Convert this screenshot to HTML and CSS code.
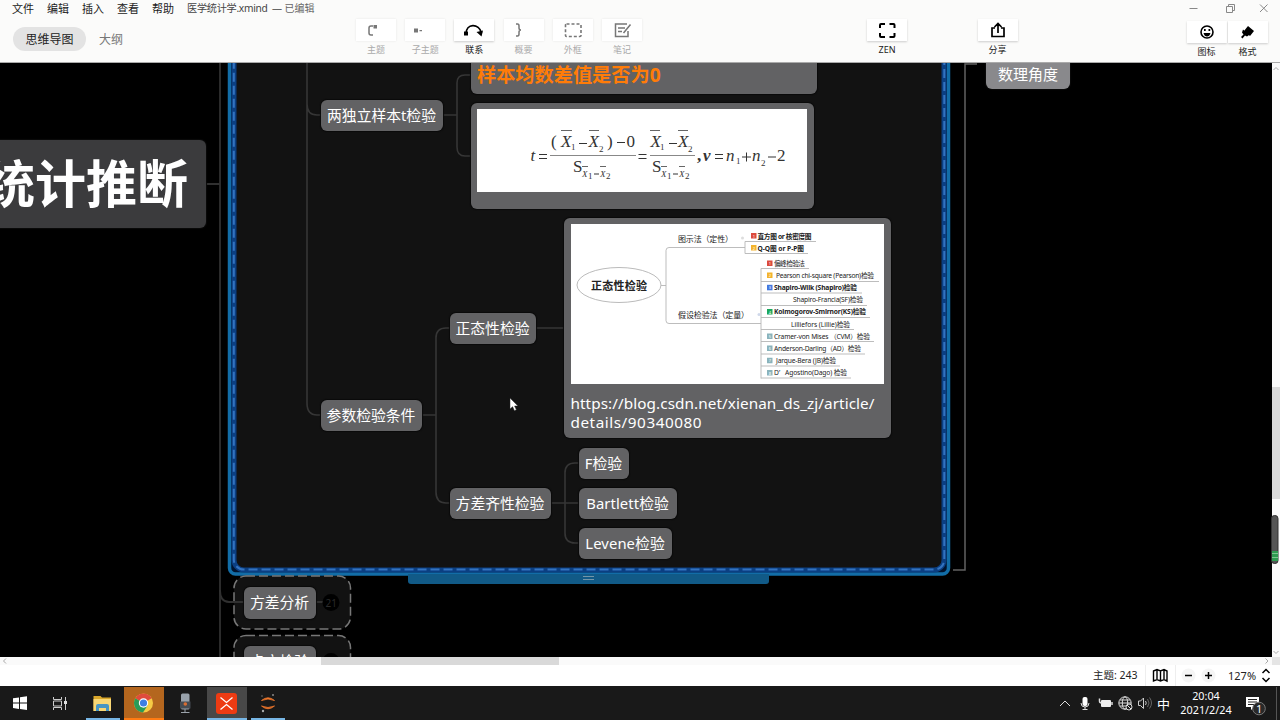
FILE: index.html
```html
<!DOCTYPE html>
<html lang="zh-CN">
<head>
<meta charset="utf-8">
<title>医学统计学.xmind</title>
<link rel="stylesheet" href="styles.css">
</head>
<body>
<div class="app">
  <header class="header">
    <div class="left">
      <nav class="menu"><span>文件</span><span>编辑</span><span>插入</span><span>查看</span><span>帮助</span><span class="doc">医学统计学.xmind</span><span class="edited">— 已编辑</span></nav>
      <div class="views"><b>思维导图</b><span>大纲</span></div>
    </div>
    <div class="tools">
      <div class="tool off"><i><svg width="40" height="22"><path d="M17 7h-2q-2 0-2 2v5q0 2 2 2h2" fill="none" stroke="#777" stroke-width="1.5"/><rect x="17.500" y="6" width="3.500" height="3.500" fill="#777"/></svg></i><span>主题</span></div>
      <div class="tool off"><i><svg width="40" height="22"><path d="M9 9.500h4v4H9zM14.500 11h2.500v1.300h-2.500z" fill="#777"/></svg></i><span>子主题</span></div>
      <div class="tool"><i><svg width="40" height="22"><path d="M12 15C12 4 25 4 27.500 14" fill="none" stroke="#000" stroke-width="1.800"/><path d="M10 12.500h4v4h-4zM22.500 13l6.500-1.500-1.500 6z"/></svg></i><span>联系</span></div>
      <div class="tool off"><i><svg width="40" height="22"><path d="M12 5h1.500q1.500 0 1.500 2v2q0 2 2 2-2 0-2 2v2q0 2-1.500 2H12" fill="none" stroke="#777" stroke-width="1.500"/></svg></i><span>概要</span></div>
      <div class="tool off"><i><svg width="40" height="22"><rect x="12.500" y="5" width="15.500" height="12.500" rx="1" fill="none" stroke="#777" stroke-width="1.600" stroke-dasharray="3 2"/></svg></i><span>外框</span></div>
      <div class="tool off"><i><svg width="40" height="22"><path d="M25 5H13.500v12.500h12.500V12M16 9h7M16 12.500h4M21.500 14l7-8.500" fill="none" stroke="#777" stroke-width="1.500"/></svg></i><span>笔记</span></div>
    </div>
    <div class="tool zen"><i><svg width="40" height="22"><path d="M18 5h-4q-1 0-1 1v3M22.500 5h4q1 0 1 1v3M13 14v3q0 1 1 1h4M27.500 14v3q0 1-1 1h-4" fill="none" stroke="#000" stroke-width="2"/></svg></i><span>ZEN</span></div>
    <div class="tool share"><i><svg width="40" height="22"><path d="M17 9h-3v8.500h12V9h-3M20 14V5M16.500 8L20 4.500 23.500 8" fill="none" stroke="#000" stroke-width="1.700"/></svg></i><span>分享</span></div>
    <div class="right">
      <svg class="win" width="90" height="16"><path d="M4.500 7.500h8M75 3.500l7.500 7.500M82.500 3.500L75 11M41.500 5.500h6v6h-6zM43.500 5.500v-2h6v6h-2" fill="none" stroke="#888" stroke-width="1"/></svg>
      <div class="pair">
        <div class="tool"><i><svg width="40" height="22"><circle cx="20" cy="11" r="6" fill="none" stroke="#000" stroke-width="1.600"/><path d="M17 8h1.700v2H17zM21.500 8h1.700v2h-1.700zM16.500 12h7q-1 3.500-3.500 3.500T16.500 12z"/></svg></i><span>图标</span></div>
        <div class="tool"><i><svg width="40" height="22"><path d="M20 5l6 5-4 5-6-5zM15 8.500l6 5.500-2 1.500-2-1-2.500 3-1.500-1.500 2.500-2.500-1.500-2z"/></svg></i><span>格式</span></div>
      </div>
    </div>
  </header>

  <main class="workspace">
    <div class="canvas">
      <svg class="lines" width="1272" height="594" viewBox="0 63 1272 594">
        <path d="M220 63V657M206 184H220" class="trunk"/>
        <rect x="229.500" y="20" width="719" height="554" rx="6" fill="#001430" stroke="#126da7" stroke-width="3.500"/>
        <rect x="234" y="24" width="710" height="546" rx="10" fill="#121212" stroke="#0b3f82" stroke-width="5"/>
        <rect x="233.800" y="24" width="710.500" height="545.500" rx="10" fill="none" stroke="#3373c0" stroke-width="2" stroke-dasharray="9 4"/>
        <path d="M408 574h361v7q0 3-3 3H411q-3 0-3-3z" fill="#115a87"/>
        <path d="M583 576.500h11M583 579.500h11" stroke="#7295a8" fill="none"/>
        <g class="wire">
          <path d="M307 63V403q0 12 10 12h4M307 104q0 11 10 11h4M443 115h14M471 75h-6q-8 0-8 8v64q0 9 8 9h6"/>
          <path d="M422 415h14M450 328h-4q-10 0-10 10v154q0 11 10 11h4M536 328h29M551 503h28M579 463h-4q-10 0-10 10v60q0 10 10 10h4"/>
        </g>
        <path d="M953 570h12V64h12" fill="none" stroke="#626262" stroke-width="1.500"/>
        <g fill="#121212" stroke="#777" stroke-width="1.500" stroke-dasharray="9 4">
          <rect x="234" y="576" width="116.500" height="53" rx="12"/>
          <rect x="234" y="635.500" width="116.500" height="53" rx="12"/>
        </g>
        <path d="M220 590q0 12 9 12h15M316 602h8" class="trunk"/>
        <circle cx="331" cy="602.500" r="8.500" fill="#000"/><text x="325.500" y="606.500" font-size="10" fill="#2b2b2b">21</text>
        <circle cx="331" cy="661.500" r="8.500" fill="#000"/>
      </svg>
      <div class="map">
        <div class="node root" style="left:-40px;top:140px;width:246px;height:88px">统计推断</div>
        <div class="node" style="left:321px;top:100px;width:122px;height:31px">两独立样本t检验</div>
        <div class="node" style="left:321px;top:400px;width:101px;height:31px">参数检验条件</div>
        <div class="node" style="left:450px;top:313px;width:86px;height:31px">正态性检验</div>
        <div class="node" style="left:450px;top:488px;width:101px;height:31px">方差齐性检验</div>
        <div class="node" style="left:579px;top:448px;width:50px;height:31px">F检验</div>
        <div class="node" style="left:579px;top:488px;width:98px;height:31px"><em>Bartlett</em>检验</div>
        <div class="node" style="left:579px;top:528px;width:93px;height:31px"><em>Levene</em>检验</div>
        <div class="node" style="left:244px;top:587px;width:72px;height:32px">方差分析</div>
        <div class="node" style="left:244px;top:646px;width:72px;height:32px">卡方检验</div>
        <div class="node angle" style="left:986px;top:50px;width:84px;height:39px">数理角度</div>
        <div class="node orange" style="left:471px;top:40px;width:346px;height:54px"><span>样本均数差值是否为0</span></div>
        <div class="node card" style="left:471px;top:103px;width:343px;height:106px">
          <svg width="330" height="83" viewBox="477 109 330 83" class="formula">
            <rect x="477" y="109" width="330" height="83" fill="#fff"/>
            <g class="it">
              <text x="530.500" y="161">t</text><text x="561" y="147" textLength="10">X</text><text x="588.500" y="147" textLength="10">X</text><text x="650.500" y="147" textLength="10">X</text><text x="678" y="147" textLength="10">X</text>
              <text x="703" y="161" font-weight="bold">ν</text><text x="726" y="161">n</text><text x="752" y="161">n</text>
            </g>
            <g>
              <text x="551" y="147">(</text><text x="607" y="147">)</text><text x="626.500" y="147">0</text><text x="573" y="172">S</text><text x="652" y="172">S</text><text x="697" y="161" font-weight="bold">,</text><text x="777" y="161">2</text>
            </g>
            <g class="sub"><text x="571" y="150">1</text><text x="599" y="152">2</text><text x="660" y="150">1</text><text x="688" y="152">2</text><text x="736" y="164">1</text><text x="761" y="166">2</text><text x="588" y="178.500">1</text><text x="606" y="178.500">2</text><text x="667" y="178.500">1</text><text x="685" y="178.500">2</text><g font-style="italic"><text x="582" y="176.500">X</text><text x="600" y="176.500">X</text><text x="661" y="176.500">X</text><text x="679" y="176.500">X</text></g></g>
            <path d="M539 154.500h8M539 158.500h8M638.500 154.500h8M638.500 158.500h8M715 154.500h8M715 158.500h8M579 143.500h8M617 142.500h8M669 143.500h8M742 157h9M746.500 152.500v9M768 157h8M594 174h5M673 174h5" stroke="#333" fill="none"/>
            <path d="M561 130.500h11M589 130.500h10M650 130.500h10M678 130.500h10M582 166.500h6M600 166.500h6M661 166.500h6M679 166.500h6" stroke="#666" fill="none"/>
            <path d="M550 155.500h86M650 155.500h45" stroke="#888" fill="none"/>
          </svg>
        </div>
        <div class="node card" style="left:564px;top:218px;width:327px;height:220px">
          <svg width="313" height="160" viewBox="571 223 313 160" class="chart">
            <rect x="571" y="223" width="313" height="160" fill="#fff"/>
            <path d="M661 284.500h5M745 246.500h-76q-3 0-3 3v70q0 3 3 3h92M745 240.500v12M745 240.500h71M745 252.500h63M761 267.500v110M761 267.500h48M761 280.500h118M761 292h101M761 304.500h106M761 316.500h109M761 328.500h93M761 340.500h113M761 353h104M761 365h79M761 377h90" fill="none" stroke="#b5b5b5" stroke-width=".9"/>
            <ellipse cx="619" cy="284" rx="42" ry="17.500" fill="#fff" stroke="#bbb"/>
            <text x="591" y="288.500" class="topic" textLength="56">正态性检验</text>
            <text x="678" y="240.500" class="method" textLength="55">图示法（定性）</text><text x="678" y="317" class="method" textLength="71">假设检验法（定量）</text>
            <circle cx="742.500" cy="237" r="1.500" fill="#ddd"/><circle cx="759" cy="313.500" r="1.500" fill="#cfd8ea"/>
            <g font-weight="bold"><text x="757.500" y="237.500" textLength="54">直方图 or 核密度图</text><text x="757.500" y="249.500" textLength="46.500">Q-Q图 or P-P图</text><text x="774" y="289" textLength="83">Shapiro-Wilk (Shapiro)检验</text><text x="774" y="313.300" textLength="92">Kolmogorov-Smirnor(KS)检验</text></g>
            <g><text x="774" y="265" textLength="31">偏峰检验法</text><text x="776" y="277" textLength="98">Pearson chi-square (Pearson)检验</text><text x="793" y="301" textLength="70">Shapiro-Francia(SF)检验</text><text x="791" y="325.500" textLength="59">Lilliefors (Lillie)检验</text><text x="774" y="337.500" textLength="96">Cramer-von Mises （CVM）检验</text><text x="774" y="349.800" textLength="87">Anderson-Darling（AD）检验</text><text x="776" y="362" textLength="60">Jarque-Bera (JB)检验</text><text x="774" y="374.300">D’</text><text x="785" y="374.300" textLength="62">Agostino(Dago) 检验</text></g>
            <path d="M751 232h5.500v5.500H751zM767 259.500h5.500v5.500H767z" fill="#dc4a3d"/><path d="M751 244h5.500v5.500H751zM767 271.500h5.500v5.500H767z" fill="#f3b32c"/><path d="M767 283.800h5.500v5.500H767z" fill="#4378df"/><path d="M767 308h5.500v5.500H767z" fill="#1aa85d"/><path d="M767 332.500h5.500v5.500H767zM767 344.500h5.500v5.500H767zM767 356.800h5.500v5.500H767zM767 369h5.500v5.500H767z" fill="#8ab3bb"/>
            <g class="tiny"><text x="752.700" y="236.500">1</text><text x="752.700" y="248.500">2</text><text x="768.700" y="264">1</text><text x="768.700" y="276">2</text><text x="768.700" y="288.300">3</text><text x="768.700" y="312.500">4</text><text x="768.700" y="337">5</text><text x="768.700" y="349">6</text><text x="768.700" y="361.300">7</text><text x="768.700" y="373.500">8</text></g>
          </svg>
          <svg width="313" height="48" viewBox="571 386 313 48" class="url"><text x="570.500" y="409" textLength="304">https://blog.csdn.net/xienan_ds_zj/article/</text><text x="570.500" y="428" textLength="131">details/90340080</text></svg>
        </div>
        <svg class="cursor" width="10" height="16"><path d="M1 1v11l2.600-2.300 1.800 4 2-1-1.800-3.700H9z" fill="#fff" stroke="#222" stroke-width=".5"/></svg>
      </div>
    </div>
    <aside class="vbar">
      <svg width="8" height="594"><path d="M1.500 7L4 4.500 6.500 7M1.500 588L4 590.500 6.500 588" fill="none" stroke="#aaa"/><rect y="324" width="8" height="112" fill="#d9d9d9"/></svg>
      <svg class="level" width="8" height="50"><rect x=".5" y=".5" width="6.500" height="48" rx="3" fill="#555" stroke="#333"/><path d="M1 36h6v10H1z" fill="#2e9a50"/><path d="M1 38.500h6M1 42.500h6" stroke="#8fd39f" stroke-width=".8"/></svg>
    </aside>
  </main>
  <div class="hbar"><svg width="1280" height="8"><path d="M6 1.500L3.500 4 6 6.500M1265.500 1.500L1268 4l-2.500 2.500" fill="none" stroke="#aaa"/><rect x="321" width="238" height="8" fill="#d9d9d9"/><rect x="1272" width="8" height="8" fill="#e5e5e5"/></svg></div>
  <footer class="status">
    <span class="count">主题: 243</span>
    <svg width="36" height="21" class="book"><path d="M.500 0v21M30.500 0v21" stroke="#eee"/><path d="M8.500 6L12 4.500 15.500 6 19 4.500 22 6v10L19 14.500l-3.500 1.500-3.500-1.500L8.500 16zM12 4.500v10M15.500 6v10M19 4.500v10" fill="none" stroke="#000" stroke-width="1.400"/></svg>
    <svg width="44" height="21" class="pm"><circle cx="7.500" cy="10.500" r="7" fill="#f5f5f5"/><circle cx="27.500" cy="10.500" r="7" fill="#f5f5f5"/><path d="M4 10.500h7M24 10.500h7M27.500 7v7" stroke="#000" stroke-width="1.500"/></svg>
    <span class="pct">127%</span>
    <svg width="10" height="21"><path d="M1.500 8L5 4.500 8.500 8M1.500 13L5 16.500 8.500 13" fill="none" stroke="#000" stroke-width="1.500"/></svg>
  </footer>
  <footer class="taskbar">
    <svg width="300" height="34" viewBox="0 686 300 34">
      <path d="M13 698.300l6-.9v5.200h-6zM20 697.200l7-1v6.400h-7zM13 703.600h6v5.400l-6-.9zM20 703.600h7v6.500l-7-1z" fill="#fff"/>
      <path d="M53.500 697v2.500h8V697M53.500 710v-2.500h8v2.500M53.500 701h8v5h-8zM65.500 697v13" fill="none" stroke="#ccc"/><rect x="64" y="701" width="3" height="3" fill="#ddd"/>
      <path d="M93.500 696h7l1.500 1.500h9V711H93.500z" fill="#d9a72b"/><path d="M93.500 699H111v12H93.500z" fill="#f8d775"/><path d="M96 711v-5q0-2 2-2h9q2 0 2 2v5h-3v-3h-7v3z" fill="#4796c4"/>
      <path d="M86 718h34v2H86zM207 718h40v2h-40zM251 718h34v2h-34z" fill="#77b6e5"/>
      <rect x="124" y="687" width="40" height="33" fill="#b4661e"/><rect x="124" y="718" width="40" height="2" fill="#ff7b12"/>
      <circle cx="143.500" cy="703" r="9.500" fill="#f6cb45"/><path d="M143.500 703L135.300 698.200A9.500 9.500 0 0 1 151.700 698.200z" fill="#df4b3d"/><path d="M143.500 703L135.300 698.200A9.500 9.500 0 0 0 143 712.500l4.500-7z" fill="#299b58"/><circle cx="143.500" cy="703" r="4.700" fill="#fff"/><circle cx="143.500" cy="703" r="3.600" fill="#3e7fe5"/>
      <rect x="181" y="693.500" width="8.500" height="16" rx="1.500" fill="#98a1aa"/><path d="M180 701.500h10.500v7H180z" fill="#444b52"/><circle cx="185.300" cy="704" r="1.800" fill="#d96d31"/><path d="M185 709v3.500M181 712.500h8.500" stroke="#9ba3ab"/>
      <rect x="207" y="687" width="40" height="31" fill="#484848"/><rect x="216" y="693" width="21" height="21" rx="3" fill="#ed3b13"/><path d="M220.500 697.500l6 5 6-5M220.500 709.500l6-5 6 5" fill="none" stroke="#fff" stroke-width="1.300"/>
      <path d="M261.500 700.500q6.500-5.500 13 0-6.500-3-13 0zM261.500 706q6.500 5.500 13 0-6.500 3-13 0z" fill="#ef762b" stroke="#ef762b" stroke-width=".8"/><circle cx="263" cy="711" r="1.200" fill="#aaa"/><circle cx="273" cy="695" r="1" fill="#888"/><circle cx="262" cy="696" r=".7" fill="#888"/>
    </svg>
    <svg width="98" height="34" viewBox="1058 686 98 34" class="tray">
      <path d="M1060 706l5-5 5 5" fill="none" stroke="#ddd"/>
      <rect x="1082.500" y="697" width="5" height="9" rx="2" fill="#fff"/><path d="M1081 703q0 4 4 4t4-4M1085 707v3M1082.500 709.500h5" fill="none" stroke="#ddd"/>
      <rect x="1101" y="700" width="10" height="7" rx="1" fill="#eee"/><path d="M1099.500 698.500v2.500q0 2 2 2M1112 702v3" fill="none" stroke="#ddd" stroke-width="1.500"/>
      <g fill="none" stroke="#ddd"><circle cx="1125" cy="703" r="6.200"/><ellipse cx="1125" cy="703" rx="2.700" ry="6.200"/><path d="M1119 703h12M1120 700h10M1120 706h10"/><circle cx="1129" cy="707" r="3" fill="#191919"/><path d="M1127 705l4 4"/></g>
      <path d="M1138.500 701h2l3-3v10.500l-3-3h-2zM1145.500 701q1.500 2 0 4" fill="none" stroke="#ccc"/><path d="M1147.500 699q3 4 0 8M1149.500 697.500q4 5.500 0 11" fill="none" stroke="#666"/>
    </svg>
    <span class="ime">中</span>
    <div class="clock"><span>20:04</span><span>2021/2/24</span></div>
    <svg class="notice" width="36" height="34" viewBox="1244 686 36 34"><path d="M1246 697h13v10h-5l-3 3v-3h-5z" fill="#fff"/><path d="M1248 699.500h9M1248 702h9M1248 704.500h6" stroke="#222"/><circle cx="1259" cy="708.500" r="6.300" fill="#292929" stroke="#777"/><text x="1256" y="712.500" font-size="11" fill="#fff">1</text><path d="M1276.500 687v33" stroke="#555"/></svg>
  </footer>
</div>
</body>
</html>
```
FILE: styles.css
```css
* { box-sizing: border-box; }
body { margin: 0; background: #000; font-family: "Noto Sans", "Noto Sans CJK SC", sans-serif; }
svg { display: block; flex: none; }
.app { width: 1280px; height: 720px; display: flex; flex-direction: column; overflow: hidden; }
.header { height: 63px; flex: none; background: #fbfbfa; border-bottom: 1px solid #aaa; display: flex; align-items: flex-start; color: #222; }
.left { width: 355px; }
.menu { display: flex; height: 17px; padding-left: 12px; font-size: 11px; line-height: 17px; white-space: nowrap; }
.menu span { width: 35px; flex: none; }
.menu .doc { width: 85px; color: #444; font-size: 10.2px; letter-spacing: -.3px; }
.menu .edited { width: 50px; color: #666; font-size: 10px; }
.views { display: flex; align-items: center; gap: 13px; padding: 10px 0 0 13px; font-size: 12px; color: #777; }
.views b { width: 73px; height: 24px; border-radius: 12px; background: #e3e3e3; color: #222; font-weight: 400; text-align: center; line-height: 25px; }
.tools { display: flex; gap: 9.2px; padding: 19px 0 0 1px; width: 355px; }
.tool { width: 40px; flex: none; display: flex; flex-direction: column; align-items: center; font-size: 9px; line-height: 12px; white-space: nowrap; }
.tool i { width: 40px; height: 22px; background: #fff; box-shadow: 0 1px 2px #ccc; }
.tool span { margin-top: 3px; }
.off { color: #aaa; }
.off i { box-shadow: 0 0 2px #e5e5e5; }
.zen { margin: 19px 0 0 157px; }
.share { margin: 19px 0 0 70.5px; }
.right { margin-left: 167px; width: 95px; padding-top: 1px; }
.pair { display: flex; padding: 4px 0 0 2px; gap: 1px; }
.workspace { height: 594px; flex: none; display: flex; }
.canvas { position: relative; width: 1272px; height: 594px; overflow: hidden; background: #000; }
.lines { position: absolute; left: 0; top: 0; }
.trunk { fill: none; stroke: #303030; stroke-width: 1.8; }
.wire { fill: none; stroke: #363636; stroke-width: 1.6; }
.map { position: absolute; left: 0; top: -63px; }
.node { position: absolute; display: flex; align-items: center; justify-content: center; background: #626264; border-radius: 6px; color: #fff; font-size: 14.8px; line-height: 20px; padding: 0 1px 2px 0; white-space: nowrap; box-shadow: 0 0 1px 1px #0a0a0a; }
.node em { font-style: normal; letter-spacing: .1px; }
.root { background: #3b3b3d; font-size: 51px; font-weight: 700; line-height: 60px; justify-content: flex-end; padding: 0 18px 3px 0; }
.angle { background: #89898c; font-size: 15px; padding: 9px 0 0; }
.orange { justify-content: flex-start; align-items: flex-end; padding: 0 6px 8px; color: #ff7c08; font-weight: 700; font-size: 19.2px; line-height: 22px; }
.card { display: block; padding: 5.5px 6px; }
.formula text { font-family: "Liberation Serif", serif; font-size: 17px; fill: #333; }
.formula .it text { font-style: italic; }
.formula .sub text { font-size: 9px; }
.card .chart { margin-left: 1px; }
.chart text { font-size: 6.7px; fill: #222; }
.chart .topic { font-size: 11px; font-weight: 700; }
.chart .method { font-size: 8px; }
.chart .tiny text { font-size: 4px; fill: #fff; }
.card .url { margin: 2px 0 0 1px; overflow: visible; }
.url text { font-size: 15.3px; fill: #fff; }
.cursor { position: absolute; left: 509px; top: 397px; }
.vbar { position: relative; width: 8px; background: #fafafa; }
.level { position: absolute; left: -1px; top: 452px; }
.hbar { height: 8px; flex: none; background: #fafafa; }
.status { height: 21px; flex: none; background: #fff; display: flex; align-items: center; color: #222; font-size: 11px; line-height: 21px; }
.count { width: 53px; margin-left: 1093px; white-space: nowrap; font-size: 10.5px; }
.book { margin-left: -1px; }
.pm { width: 47px; }
.pct { width: 33px; }
.taskbar { height: 34px; flex: none; background: #191919; display: flex; align-items: center; color: #fff; }
.tray { margin-left: 758px; }
.ime { width: 22px; padding-left: 1px; font-size: 13px; }
.clock { width: 56px; display: flex; flex-direction: column; align-items: center; font-size: 10.8px; line-height: 14.5px; }
.notice { margin-left: 10px; }
```
